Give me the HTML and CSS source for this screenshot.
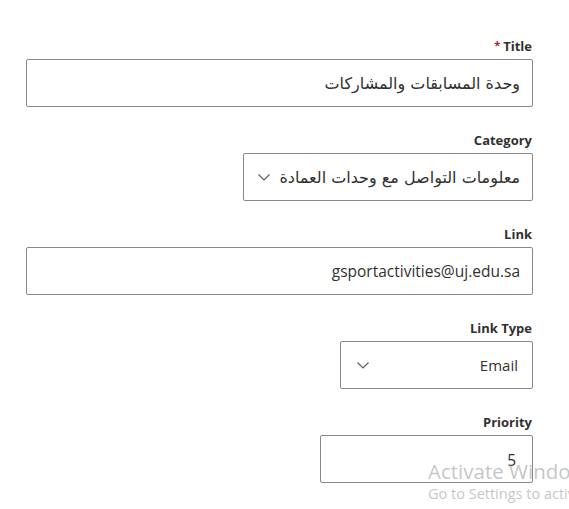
FILE: index.html
```html
<!DOCTYPE html>
<html lang="ar">
<head>
<meta charset="utf-8">
<title>Edit item</title>
<link rel="stylesheet" href="styles.css">
</head>
<body>
<form class="form" dir="rtl">
  <div class="field">
    <label class="label"><span class="req">*</span>Title</label>
    <div class="control wide"><span class="value ar">وحدة المسابقات والمشاركات</span></div>
  </div>
  <div class="field">
    <label class="label">Category</label>
    <div class="control select cat">
      <span class="value ar">معلومات التواصل مع وحدات العمادة</span>
      <svg class="chev" viewBox="0 0 12 7" width="12" height="7"><path d="M0.5 0.5 L6 6 L11.5 0.5" fill="none" stroke="#605e5c" stroke-width="1.2"/></svg>
    </div>
  </div>
  <div class="field">
    <label class="label">Link</label>
    <div class="control wide"><span class="value" dir="ltr">gsportactivities@uj.edu.sa</span></div>
  </div>
  <div class="field">
    <label class="label">Link Type</label>
    <div class="control select type">
      <span class="value">Email</span>
      <svg class="chev" viewBox="0 0 12 7" width="12" height="7"><path d="M0.5 0.5 L6 6 L11.5 0.5" fill="none" stroke="#605e5c" stroke-width="1.2"/></svg>
    </div>
  </div>
  <div class="field">
    <label class="label">Priority</label>
    <div class="control prio"><span class="value num">5</span></div>
  </div>
</form>
<div class="activate">
  <div class="act-title">Activate Windows</div>
  <div class="act-sub">Go to Settings to activate Windows.</div>
</div>
</body>
</html>
```

FILE: styles.css
```css
html, body {
  margin: 0;
  padding: 0;
  background: #ffffff;
  width: 569px;
  height: 509px;
  overflow: hidden;
  font-family: "Open Sans", "DejaVu Sans", sans-serif;
  color: #323130;
}

.form {
  display: flex;
  flex-direction: column;
  align-items: flex-start;
  padding: 36px 36px 0 0;
  gap: 24px;
}

.field {
  display: flex;
  flex-direction: column;
  align-items: flex-start;
}

.label {
  font-size: 13px;
  font-weight: 700;
  line-height: 20px;
  color: #323130;
  padding: 0 1px 3px 0;
  direction: ltr;
  margin-top: -1px;
}

.req {
  color: #a4262c;
  font-size: 11px;
  margin-right: 3px;
  vertical-align: 2px;
}

.control {
  box-sizing: border-box;
  height: 48px;
  border: 1px solid #8a8886;
  border-radius: 2px;
  display: flex;
  align-items: center;
  padding: 0 12px;
  font-size: 15.5px;
  color: #323130;
  background: #fff;
}

.wide { width: 507px; }
.cat { width: 290px; padding-right: 12px; padding-left: 14px; justify-content: space-between; }
.type { width: 193px; padding-right: 14px; padding-left: 16px; justify-content: space-between; }
.prio { width: 213px; padding-right: 16px; }

.value {
  white-space: nowrap;
  font-family: "Open Sans", "DejaVu Sans", sans-serif;
}

.value.ar {
  font-family: "DejaVu Sans", sans-serif;
  font-size: 16px;
}

.type .value { font-size: 15px; }

.num { padding-top: 2px; }

.chev { flex: none; }

/* system watermark laid over the page corner */
.activate {
  position: absolute;
  left: 428px;
  top: 458px;
  color: rgba(140, 140, 140, 0.5);
  white-space: nowrap;
  font-family: "Open Sans", sans-serif;
  pointer-events: none;
}

.act-title { font-size: 20.5px; line-height: 26px; }
.act-sub { font-size: 14.5px; line-height: 20px; }
```
